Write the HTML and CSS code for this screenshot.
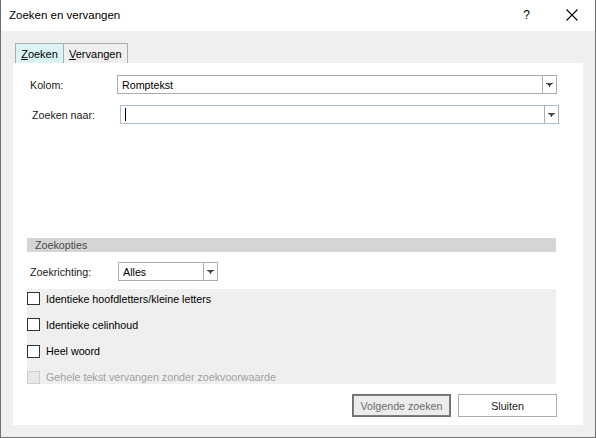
FILE: index.html
```html
<!DOCTYPE html>
<html>
<head>
<meta charset="utf-8">
<link rel="stylesheet" href="styles.css">
</head>
<body>
<div class="window">
  <div class="titlebar">
    <span class="title">Zoeken en vervangen</span>
    <span class="help">?</span>
    <svg class="close" width="12" height="12" viewBox="0 0 12 12"><path d="M0.5 0.5L11.5 11.5M11.5 0.5L0.5 11.5" stroke="#000" stroke-width="1.1" fill="none"/></svg>
  </div>
  <div class="content">
    <div class="tabs">
      <div class="tab active"><u>Z</u>oeken</div>
      <div class="tab"><u>V</u>ervangen</div>
    </div>
    <div class="panel">
      <div class="row row-kolom">
        <span class="label lbl-kolom">Kolom:</span>
        <div class="combo combo-kolom">
          <span class="combo-text">Romptekst</span>
          <span class="combo-btn"><svg width="7" height="4" viewBox="0 0 7 4"><path d="M0 0H7V1H6L4 3V4H3V3L1 1H0Z" fill="#444"/></svg></span>
        </div>
      </div>
      <div class="row row-zoek">
        <span class="label lbl-zoek">Zoeken naar:</span>
        <div class="combo combo-zoek">
          <span class="combo-text"><span class="caret"></span></span>
          <span class="combo-btn"><svg width="7" height="4" viewBox="0 0 7 4"><path d="M0 0H7V1H6L4 3V4H3V3L1 1H0Z" fill="#444"/></svg></span>
        </div>
      </div>
      <div class="section-bar">Zoekopties</div>
      <div class="row row-richting">
        <span class="label lbl-richting">Zoekrichting:</span>
        <div class="combo combo-richting">
          <span class="combo-text">Alles</span>
          <span class="combo-btn"><svg width="7" height="4" viewBox="0 0 7 4"><path d="M0 0H7V1H6L4 3V4H3V3L1 1H0Z" fill="#444"/></svg></span>
        </div>
      </div>
      <div class="options">
        <div class="check"><span class="box"></span><span>Identieke hoofdletters/kleine letters</span></div>
        <div class="check"><span class="box"></span><span>Identieke celinhoud</span></div>
        <div class="check"><span class="box"></span><span>Heel woord</span></div>
        <div class="check disabled"><span class="box"></span><span>Gehele tekst vervangen zonder zoekvoorwaarde</span></div>
      </div>
      <div class="buttons">
        <div class="btn btn-default">Volgende zoeken</div>
        <div class="btn">Sluiten</div>
      </div>
    </div>
  </div>
</div>
</body>
</html>
```
FILE: styles.css
```css
html, body {
  margin: 0;
  padding: 0;
}
body {
  width: 596px;
  height: 438px;
  font-family: "Liberation Sans", Arial, sans-serif;
  font-size: 10.7px;
  color: #000;
  overflow: hidden;
}
.window {
  width: 596px;
  height: 438px;
  box-sizing: border-box;
  border-left: 1px solid #6f6f6f;
  border-right: 1px solid #6f6f6f;
  border-bottom: 1px solid #6f6f6f;
  background: #efefef;
  display: flex;
  flex-direction: column;
}
.titlebar {
  height: 31px;
  background: #fff;
  display: flex;
  align-items: center;
  padding-left: 8px;
  flex-shrink: 0;
}
.title {
  font-size: 11.5px;
  flex: 1;
  padding-bottom: 1px;
}
.help {
  font-size: 12px;
  margin-right: 36px;
  padding-bottom: 2px;
}
.close {
  margin-right: 17px;
  margin-bottom: 2px;
}
.content {
  padding-left: 12px;
  padding-top: 12px;
}
.tabs {
  display: flex;
  padding-left: 2px;
  height: 20px;
}
.tab {
  height: 20px;
  box-sizing: border-box;
  border: 1px solid #acacac;
  border-bottom: none;
  background: #efefef;
  padding: 0 5px;
  line-height: 20px;
  font-size: 11px;
}
.tab + .tab {
  border-left: none;
}
.tab.active {
  background: #daf3f4;
  width: 49px;
  text-align: center;
  padding: 0;
}
.tab u {
  text-decoration: underline;
  text-underline-offset: 1px;
}
.panel {
  width: 570px;
  height: 362px;
  background: #fff;
  box-sizing: border-box;
  padding-top: 12px;
}
.row {
  display: flex;
  align-items: center;
}
.label {
  color: #222;
}
.lbl-kolom { margin-left: 17px; width: 87px; }
.lbl-zoek { margin-left: 19px; width: 88px; }
.lbl-richting { margin-left: 17px; width: 88px; }
.row-zoek { margin-top: 11px; }
.combo {
  display: flex;
  box-sizing: border-box;
  border: 1px solid #adadad;
  background: #fff;
}
.combo-text {
  flex: 1;
  padding-left: 4px;
  display: flex;
  align-items: center;
}
.combo-btn {
  width: 13px;
  border-left: 1px solid #adadad;
  display: flex;
  align-items: center;
  justify-content: center;
}
.combo-kolom { width: 440px; height: 19px; }
.combo-zoek {
  width: 439px;
  height: 19px;
  border-color: #a9bcd8;
  border-right-color: #adadad;
}
.combo-zoek .combo-btn { border-left-color: #adadad; }
.caret {
  width: 1px;
  height: 13px;
  background: #000;
}
.combo-richting { width: 100px; height: 19px; }
.section-bar {
  margin-top: 114px;
  margin-left: 14px;
  width: 529px;
  height: 14px;
  line-height: 14px;
  background: #d5d5d5;
  color: #4a4a4a;
  padding-left: 8px;
  box-sizing: border-box;
}
.row-richting { margin-top: 10px; }
.options {
  margin-top: 8px;
  margin-left: 14px;
  width: 529px;
  height: 95px;
  background: #efefef;
  box-sizing: border-box;
  padding-top: 3px;
  display: flex;
  flex-direction: column;
  gap: 13.3px;
}
.check {
  display: flex;
  align-items: center;
  height: 13px;
  gap: 6px;
}
.check .box {
  width: 13px;
  height: 13px;
  box-sizing: border-box;
  border: 1px solid #333;
  background: #fff;
}
.check.disabled { color: #a0a0a0; }
.check.disabled .box {
  border-color: #cfcfcf;
  background: #e8e8e8;
}
.buttons {
  margin-top: 10px;
  margin-right: 26px;
  display: flex;
  justify-content: flex-end;
  gap: 7px;
}
.btn {
  width: 99px;
  height: 23px;
  box-sizing: border-box;
  border: 1px solid #adadad;
  background: #fff;
  display: flex;
  align-items: center;
  justify-content: center;
  color: #222;
}
.btn-default {
  border-color: #6f6f6f;
  box-shadow: inset 0 0 0 1px #7d7d7d;
  background: #ececec;
  color: #6d6d6d;
}
```
